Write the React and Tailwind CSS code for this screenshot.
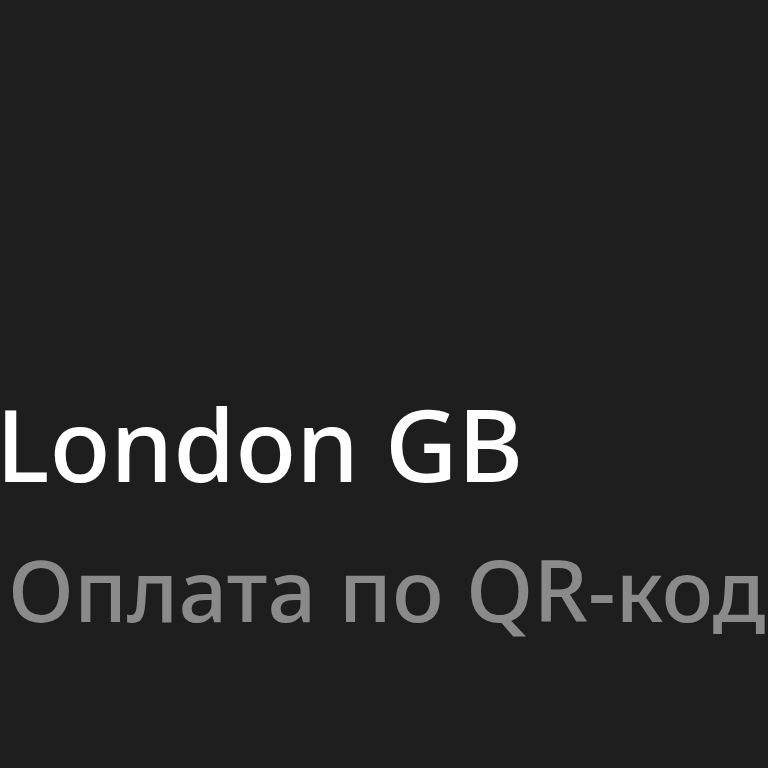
export default function App() {
  return (
    <div className="h-[768px] w-[768px] overflow-hidden bg-[#1e1e1e] font-['Noto_Sans',sans-serif] font-medium">
      <div className="flex flex-col whitespace-nowrap pt-[393px]">
        <div className="-ml-[4px] text-[100px] leading-none text-white">London GB</div>
        <div className="ml-[8px] mt-[53px] text-[86px] leading-none text-[#8a8a8a]">Оплата по QR-код</div>
      </div>
    </div>
  );
}
